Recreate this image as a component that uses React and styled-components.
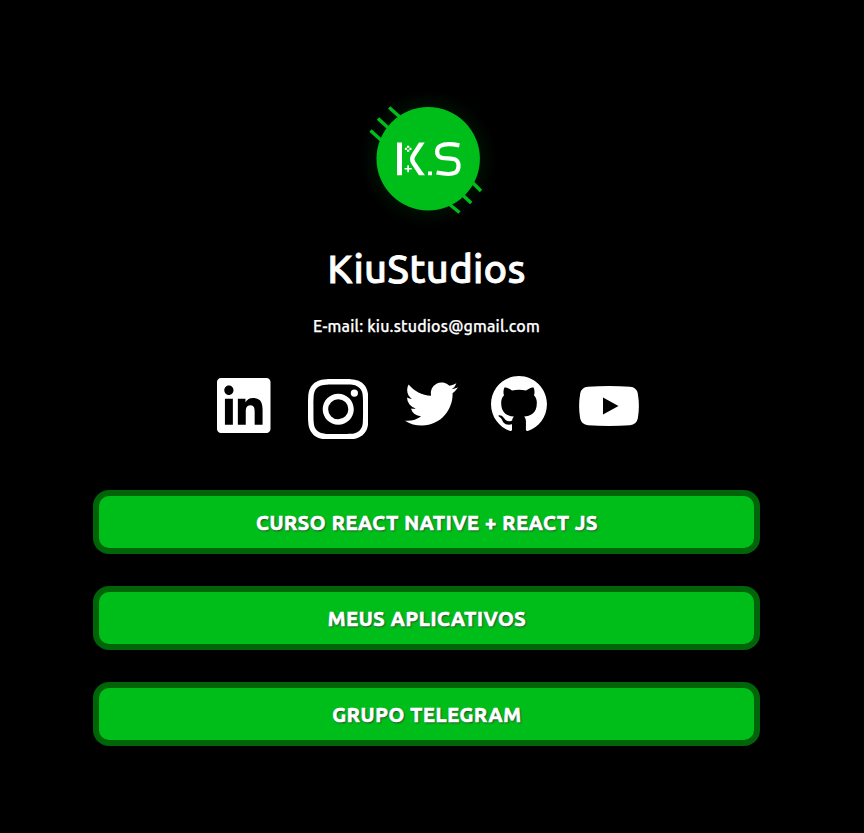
import React from "react";
import styled, { createGlobalStyle } from "styled-components";
import { SiInstagram } from "react-icons/si";

const GlobalStyle = createGlobalStyle`
  * { box-sizing: border-box; }
  body {
    margin: 0;
    background: #000;
    color: #fff;
    font-family: Ubuntu, "Noto Sans", sans-serif;
    overflow: hidden;
  }
`;

const Page = styled.main`
  width: 853px;
  height: 833px;
  display: flex;
  flex-direction: column;
  align-items: center;
  padding-top: 87px;
`;

const Logo = styled.svg`
  width: 144px;
  height: 144px;
  margin-left: 3px;
  flex: none;
`;

const Fitted = styled.svg`
  display: block;
  flex: none;
  overflow: visible;
  fill: #fff;
`;

const Title = styled.h1`
  margin: 10px 0 0;
  height: 56px;
  line-height: 56px;
  font-size: 40px;
  font-weight: 500;
  letter-spacing: 0.2px;
  -webkit-text-stroke: 0.8px #fff;
  white-space: nowrap;
`;

const Email = styled.p`
  margin: 17px 0 0;
  height: 24px;
  line-height: 24px;
  font-size: 16px;
  font-weight: 500;
  letter-spacing: 0.17px;
  -webkit-text-stroke: 0.25px #fff;
  white-space: nowrap;
`;

const Socials = styled.nav`
  display: flex;
  width: 422px;
  height: 64px;
  margin: 38px 0 0 3px;
  align-items: flex-start;
`;

const SocialLink = styled.a`
  display: block;
  flex: none;
  color: #fff;
  width: ${(p) => p.$w}px;
  height: ${(p) => p.$h}px;
  margin-top: ${(p) => p.$top}px;
  margin-right: ${(p) => p.$gap || 0}px;

  svg {
    display: block;
    width: 100%;
    height: 100%;
    fill: currentColor;
  }
`;

const Links = styled.div`
  display: flex;
  flex-direction: column;
  gap: 32px;
  width: 667px;
  margin-top: 50px;
`;

const LinkButton = styled.a`
  display: flex;
  align-items: center;
  justify-content: center;
  height: 64px;
  border: 6px solid #006408;
  border-radius: 16px;
  background: #00be19;
  color: #fff;
  font-size: 20px;
  line-height: 24px;
  padding: 1px 0 0 1px;
  font-weight: 700;
  letter-spacing: 0.66px;
  -webkit-text-stroke: 0.7px #fff;
  white-space: nowrap;
  text-shadow: 1px 1px 2px #333;
`;

const links = [
  "CURSO REACT NATIVE + REACT JS",
  "MEUS APLICATIVOS",
  "GRUPO TELEGRAM",
];

function StudioLogo() {
  return (
    <Logo viewBox="356 87 144 144" role="img" aria-label="K.S">
      <defs>
        <radialGradient id="glow">
          <stop offset="0.7" stopColor="#00be19" stopOpacity="0.09" />
          <stop offset="1" stopColor="#00be19" stopOpacity="0" />
        </radialGradient>
      </defs>
      <circle cx="428.2" cy="158.8" r="68" fill="url(#glow)" />
      <path
        d="M389.2 107.5 L401 118 M378 118.5 L390 129.5 M370.5 130.5 L382 141 M472 182 L481 191 M462 194.500 L471.200 203 M449 204 L459.500 212.500"
        stroke="#00be19"
        strokeWidth="3.4"
      />
      <circle cx="428.2" cy="158.8" r="51.7" fill="#00be19" />
      <g fill="#fff">
        <path d="M397 142.500h5v32.700h-5z M419 142.500h5.700l-9.500 14.200q-1.700 2.300 0 4.700l9.700 13.800h-6l-7.400-11.200q-2.900-4.900 0-9.700z M428 171.400h4v3.800h-4z" />
        <path d="M407.300 165.200h1.700v2.700h2.700v1.700h-2.700v2.700h-1.700v-2.700h-2.700v-1.700h2.700z" />
        <path d="M407 145.700h2.300v2h-2.300z M407 149.800h2.300v2h-2.300z M404.900 147.700h2v2.200h-2z M409.400 147.700h2v2.200h-2z" />
      </g>
      <path
        d="M459.400 145.400C452.500 144 444 143.700 440.100 146C436.200 148.400 436.200 154.700 439.800 157C443.500 159.300 452.500 157.400 456.200 160.100C459.700 162.700 459.200 170.400 455.300 172.700C450.800 175.100 443.500 173.900 436.600 172.500"
        stroke="#fff"
        strokeWidth="4.2"
        fill="none"
      />
    </Logo>
  );
}

export default function App() {
  return (
    <>
      <GlobalStyle />
      <Page>
        <StudioLogo />
        <Title>KiuStudios</Title>
        <Email>E-mail: kiu.studios@gmail.com</Email>
        <Socials>
          <SocialLink $w={53.5} $h={55} $top={2.3} $gap={37.3} aria-label="LinkedIn">
            <Fitted viewBox="0 0 24 24" preserveAspectRatio="none">
              <path d="M20.447 20.452h-3.554v-5.569c0-1.328-.027-3.037-1.852-3.037-1.853 0-2.136 1.445-2.136 2.939v5.667H9.351V9h3.414v1.561h.046c.477-.9 1.637-1.85 3.37-1.85 3.601 0 4.267 2.37 4.267 5.455v6.286zM5.337 7.433c-1.144 0-2.063-.926-2.063-2.065 0-1.138.92-2.063 2.063-2.063 1.14 0 2.064.925 2.064 2.063 0 1.139-.925 2.065-2.064 2.065zm1.782 13.019H3.555V9h3.564v11.452zM22.225 0H1.771C.792 0 0 .774 0 1.729v20.542C0 23.227.792 24 1.771 24h20.451C23.2 24 24 23.227 24 22.271V1.729C24 .774 23.2 0 22.222 0z" />
            </Fitted>
          </SocialLink>
          <SocialLink $w={60.5} $h={60.5} $top={2.7} $gap={36.5} aria-label="Instagram">
            <SiInstagram />
          </SocialLink>
          <SocialLink $w={53} $h={44} $top={6} $gap={33.2} aria-label="Twitter">
            <Fitted viewBox="0 2.25 24 19.53">
              <path d="M23.953 4.57a10 10 0 01-2.825.775 4.958 4.958 0 002.163-2.723c-.951.555-2.005.959-3.127 1.184a4.92 4.92 0 00-8.384 4.482C7.69 8.095 4.067 6.13 1.64 3.162a4.822 4.822 0 00-.666 2.475c0 1.71.87 3.213 2.188 4.096a4.904 4.904 0 01-2.228-.616v.06a4.923 4.923 0 003.946 4.827 4.996 4.996 0 01-2.212.085 4.936 4.936 0 004.604 3.417 9.867 9.867 0 01-6.102 2.105c-.39 0-.779-.023-1.17-.067a13.995 13.995 0 007.557 2.209c9.053 0 13.998-7.496 13.998-13.985 0-.21 0-.42-.015-.63A9.935 9.935 0 0024 4.59z" />
            </Fitted>
          </SocialLink>
          <SocialLink $w={56} $h={55} $top={0} $gap={32} aria-label="GitHub">
            <Fitted viewBox="0 0 97.7 96">
              <path
                fillRule="evenodd"
                d="M48.854 0C21.839 0 0 22 0 49.217c0 21.756 13.993 40.172 33.405 46.69 2.427.49 3.316-1.059 3.316-2.362 0-1.141-.08-5.052-.08-9.127-13.59 2.934-16.42-5.867-16.42-5.867-2.184-5.704-5.42-7.17-5.42-7.17-4.448-3.015.324-3.015.324-3.015 4.934.326 7.523 5.052 7.523 5.052 4.367 7.496 11.404 5.378 14.235 4.074.404-3.178 1.699-5.378 3.074-6.6-10.839-1.141-22.243-5.378-22.243-24.283 0-5.378 1.94-9.778 5.014-13.2-.485-1.222-2.184-6.275.486-13.038 0 0 4.125-1.304 13.426 5.052a46.97 46.97 0 0 1 12.214-1.63c4.125 0 8.33.571 12.213 1.63 9.302-6.356 13.427-5.052 13.427-5.052 2.67 6.763.97 11.816.485 13.038 3.155 3.422 5.015 7.822 5.015 13.2 0 18.905-11.404 23.06-22.324 24.283 1.78 1.548 3.316 4.481 3.316 9.126 0 6.6-.08 11.897-.08 13.526 0 1.304.89 2.853 3.316 2.364 19.412-6.52 33.405-24.935 33.405-46.691C97.707 22 75.788 0 48.854 0z"
              />
            </Fitted>
          </SocialLink>
          <SocialLink $w={60} $h={40} $top={10} aria-label="YouTube">
            <Fitted viewBox="0 0 60 40">
              <path
                fillRule="evenodd"
                d="M9 .8Q30-.8 51 .8Q57.500 1.300 58.800 7.500Q61 20 58.800 32.500Q57.500 38.700 51 39.200Q30 40.800 9 39.200Q2.500 38.700 1.200 32.500Q-1 20 1.200 7.500Q2.500 1.300 9 .8zM24 11.500v17l15.500-8.500z"
              />
            </Fitted>
          </SocialLink>
        </Socials>
        <Links>
          {links.map((label) => (
            <LinkButton key={label}>{label}</LinkButton>
          ))}
        </Links>
      </Page>
    </>
  );
}
